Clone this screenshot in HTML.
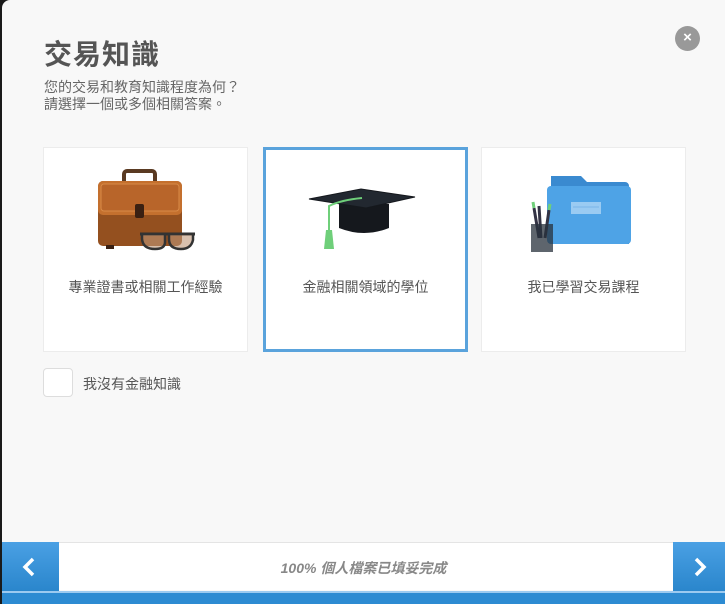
<!DOCTYPE html>
<html><head><meta charset="utf-8"><style>
*{margin:0;padding:0;box-sizing:border-box}
body{width:725px;height:604px;background:#1a1a1a;font-family:"Liberation Sans","Noto Sans CJK TC",sans-serif;overflow:hidden;position:relative}
.panel{position:absolute;left:2px;top:0;width:723px;height:604px;background:#f8f8f8;border-top-left-radius:8px;overflow:hidden}
h1{position:absolute;left:42px;top:33px;font-size:28px;font-weight:bold;color:#555;letter-spacing:1px}
.sub{position:absolute;left:42px;top:79px;font-size:14px;line-height:17px;color:#666}
.close{position:absolute;left:673px;top:26px;width:25px;height:25px;border-radius:50%;background:#999;color:#fff;font-size:15px;font-weight:bold;text-align:center;line-height:24px}
.card{position:absolute;top:147px;width:205px;height:205px;background:#fff;border:1px solid #ececec}
.card.sel{border:3px solid #5aa3dc}
.card .t{position:absolute;left:0;right:0;top:129px;text-align:center;font-size:14px;color:#555}
.card.sel .t{top:127px}
.card svg{position:absolute;left:50%;transform:translateX(-50%);top:20px}
.cb{position:absolute;left:41px;top:368px;width:30px;height:29px;background:#fff;border:1px solid #ddd;border-radius:4px}
.cbl{position:absolute;left:81px;top:374px;font-size:14px;color:#555}
.bar{position:absolute;left:0;top:542px;width:723px;height:48px;background:#fff;border-top:1px solid #e4e4e4}
.btn{position:absolute;top:542px;width:57px;height:49px;background:linear-gradient(#4aa0e4,#2a86cc)}
.btn svg{position:absolute;left:20px;top:15px}
.prog{position:absolute;left:0;width:723px;top:558px;text-align:center;font-size:14px;font-style:italic;font-weight:bold;color:#888}
.strip{position:absolute;left:0;top:591px;width:723px;height:13px;background:#2d8bd2;border-top:2px solid #9ccaf0}
</style></head><body>
<div class="panel">
<h1>交易知識</h1>
<div class="sub">您的交易和教育知識程度為何？<br>請選擇一個或多個相關答案。</div>
<div class="close">×</div>

<div class="card" style="left:41px">
<svg width="100" height="85" viewBox="0 0 100 85">
<rect x="28" y="3" width="31" height="13" rx="3" fill="none" stroke="#5a3a22" stroke-width="4"/>
<rect x="2" y="13" width="84" height="65" rx="5" fill="#94501f"/>
<rect x="2" y="13" width="84" height="34" rx="5" fill="#c4702e"/>
<rect x="5" y="16" width="78" height="27" rx="3" fill="#b8652a" stroke="#d88a48" stroke-width="1"/>
<rect x="39" y="36" width="9" height="14" rx="2" fill="#3a2012"/>
<rect x="10" y="77" width="8" height="4" fill="#3a2012"/>
<path d="M44 66 h55" stroke="#333" stroke-width="3"/>
<path d="M46 66 h23 v8 q0 7 -10 7 q-12 0 -13 -10z M73 66 h24 v6 q-2 9 -12 9 q-12 0 -12 -10z" fill="rgba(190,150,120,.6)" stroke="#333" stroke-width="2.5"/>
</svg>
<div class="t">專業證書或相關工作經驗</div></div>

<div class="card sel" style="left:261px">
<svg width="120" height="85" viewBox="0 0 120 85">
<path d="M33 34 v24 q25 10 50 0 v-24z" fill="#15181d"/>
<path d="M3 29 L55 19 L109 27 L60 38 Z" fill="#222830" stroke="#15181d"/>
<path d="M56 28 Q35 30 23 36 V62" stroke="#6fcf7a" stroke-width="2" fill="none"/>
<path d="M20 60 h6 l2 19 h-10z" fill="#6fcf7a"/>
</svg>
<div class="t">金融相關領域的學位</div></div>

<div class="card" style="left:479px">
<svg width="110" height="85" viewBox="0 0 110 85">
<path d="M22 8 h30 l6 6 h38 a4 4 0 0 1 4 4 v58 h-78z" fill="#3a8ad0"/>
<rect x="18" y="18" width="84" height="58" rx="4" fill="#4ea3e6"/>
<rect x="42" y="34" width="30" height="12" fill="#9acbf2"/>
<line x1="44" y1="39" x2="70" y2="39" stroke="#7ab6e8"/>
<path d="M5 40 L10 70 M10 38 L12 70 M20 42 L16 70" stroke="#334" stroke-width="3"/>
<path d="M5 40 l-1-6 M20 42 l1-6" stroke="#6fcf7a" stroke-width="3"/>
<rect x="2" y="56" width="22" height="28" fill="rgba(40,50,60,.75)"/>
</svg>
<div class="t">我已學習交易課程</div></div>

<div class="cb"></div><div class="cbl">我沒有金融知識</div>

<div class="bar"></div>
<div class="btn" style="left:0"><svg width="14" height="20" viewBox="0 0 14 20"><path d="M11 2 L3 10 L11 18" stroke="#fff" stroke-width="3.5" fill="none"/></svg></div>
<div class="btn" style="left:671px;width:52px"><svg width="14" height="20" viewBox="0 0 14 20"><path d="M3 2 L11 10 L3 18" stroke="#fff" stroke-width="3.5" fill="none"/></svg></div>
<div class="prog">100% 個人檔案已填妥完成</div>
<div class="strip"></div>
</div>
</body></html>
